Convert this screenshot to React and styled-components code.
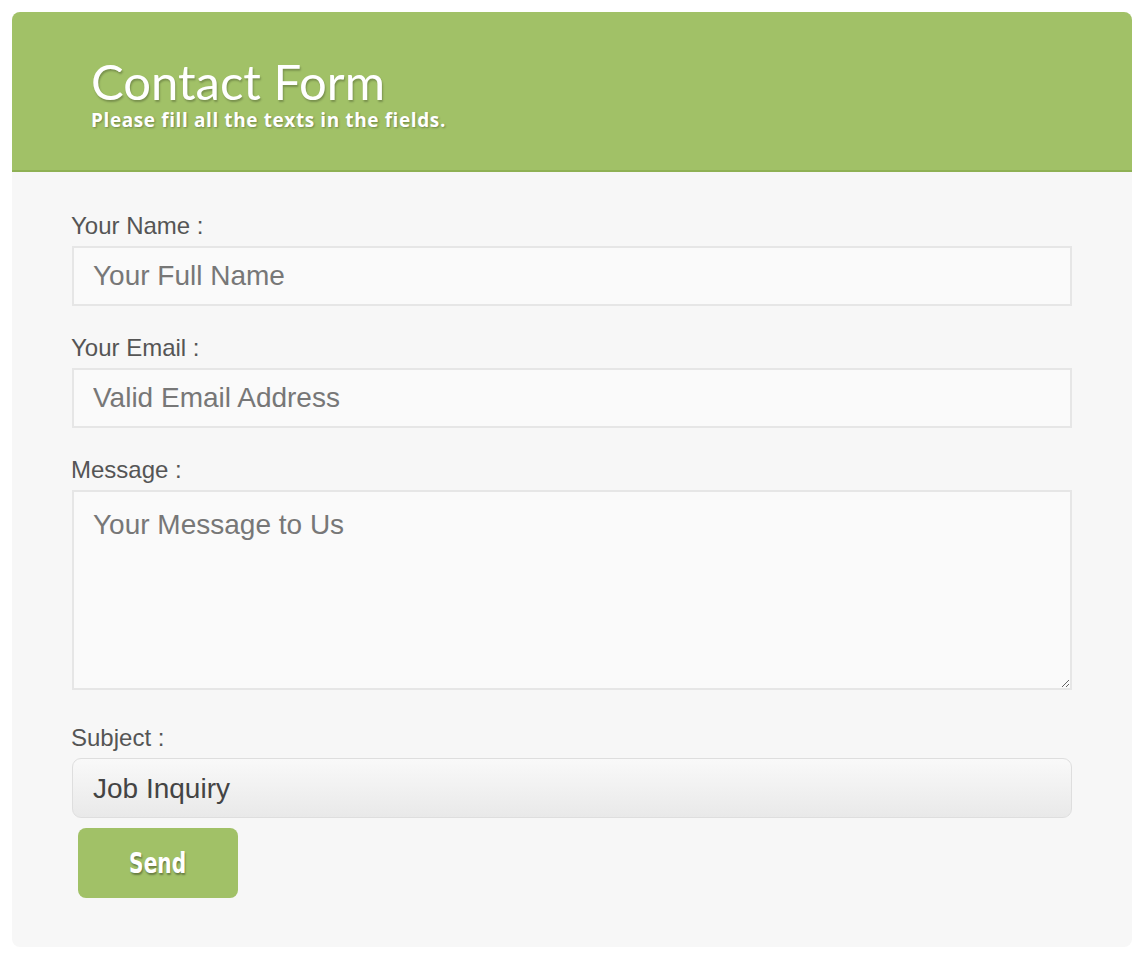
import React from 'react'
import styled, { createGlobalStyle } from 'styled-components'

const GlobalStyle = createGlobalStyle`
    body{
        margin: 0;
        background-color: #fff;
        font-family: "Liberation Sans", Arial, sans-serif;
    }
`

const Card = styled.div`
    margin: 12px 16px 0 12px;
    width: 1120px;
    border-radius: 8px;
    overflow: hidden;
    background-color: #f7f7f7;
`

const Header = styled.div`
    height: 160px;
    padding: 0 0 0 79px;
    box-sizing: border-box;
    background-color: #a1c167;
    border-bottom: 2px solid #8fb154;
    color: #fff;
    font-family: Lato, "DejaVu Sans", sans-serif;

    h1{
        margin: 0;
        padding-top: 41px;
        font-size: 49px;
        font-weight: 400;
        line-height: 56px;
        text-shadow: 1px 2px 2px rgba(0, 0, 0, 0.25);
    }

    p{
        margin: 0;
        font-family: "Open Sans", Lato, sans-serif;
        font-size: 19px;
        font-weight: 700;
        line-height: 22px;
        letter-spacing: 0.6px;
        text-shadow: 1px 1px 2px rgba(0, 0, 0, 0.3);
    }
`

const Form = styled.form`
    display: flex;
    flex-direction: column;
    padding: 40px 60px 49px 59px;
`

const Field = styled.div`
    display: flex;
    flex-direction: column;
    margin-bottom: ${props => props.gap ?? 28}px;

    label{
        font-size: 24px;
        line-height: 28px;
        color: #555;
        margin-bottom: 6px;
    }
`

const Input = styled.input`
    box-sizing: border-box;
    margin-left: 1px;
    width: 1000px;
    height: 60px;
    padding: 0 19px;
    border: 2px solid #e6e6e6;
    background-color: #fafafa;
    font-family: "Liberation Sans", Arial, sans-serif;
    font-size: 28px;
    color: #555;
    outline: none;

    &::placeholder{
        color: #777;
    }
`

const TextArea = styled.textarea`
    box-sizing: border-box;
    display: block;
    margin-left: 1px;
    width: 1000px;
    height: 200px;
    padding: 17px 19px;
    border: 2px solid #e6e6e6;
    background-color: #fafafa;
    font-family: "Liberation Sans", Arial, sans-serif;
    font-size: 28px;
    line-height: 32px;
    color: #555;
    outline: none;

    &::placeholder{
        color: #777;
    }
`

const Select = styled.select`
    box-sizing: border-box;
    margin-left: 1px;
    width: 1000px;
    height: 60px;
    padding: 0 20px;
    border: 1px solid #dedede;
    border-radius: 9px;
    background: linear-gradient(#f9f9f9, #e9e9e9);
    font-family: "Liberation Sans", Arial, sans-serif;
    font-size: 28px;
    color: #444;
    appearance: none;
    outline: none;
`

const SendButton = styled.button`
    align-self: flex-start;
    margin: 10px 0 0 7px;
    width: 160px;
    height: 70px;
    border: none;
    border-radius: 8px;
    background-color: #a1c167;
    color: #fff;
    font-family: "DejaVu Sans Condensed", "DejaVu Sans", sans-serif;
    font-size: 28px;
    font-weight: 700;
    text-shadow: 1px 2px 2px rgba(0, 0, 0, 0.35);
    cursor: pointer;

    span{
        display: inline-block;
        transform: scaleX(0.8);
    }
`

const App = () => {
  return (
    <>
        <GlobalStyle />
        <Card>
            <Header>
                <h1>Contact Form</h1>
                <p>Please fill all the texts in the fields.</p>
            </Header>

            <Form onSubmit={e => e.preventDefault()}>
                <Field>
                    <label htmlFor="name">Your Name :</label>
                    <Input id="name" type="text" placeholder="Your Full Name" />
                </Field>
                <Field>
                    <label htmlFor="email">Your Email :</label>
                    <Input id="email" type="email" placeholder="Valid Email Address" />
                </Field>
                <Field gap={34}>
                    <label htmlFor="message">Message :</label>
                    <TextArea id="message" placeholder="Your Message to Us" />
                </Field>
                <Field gap={0}>
                    <label htmlFor="subject">Subject :</label>
                    <Select id="subject" defaultValue="job">
                        <option value="job">Job Inquiry</option>
                        <option value="general">General Question</option>
                    </Select>
                </Field>
                <SendButton type="submit"><span>Send</span></SendButton>
            </Form>
        </Card>
    </>
  )
}

export default App
